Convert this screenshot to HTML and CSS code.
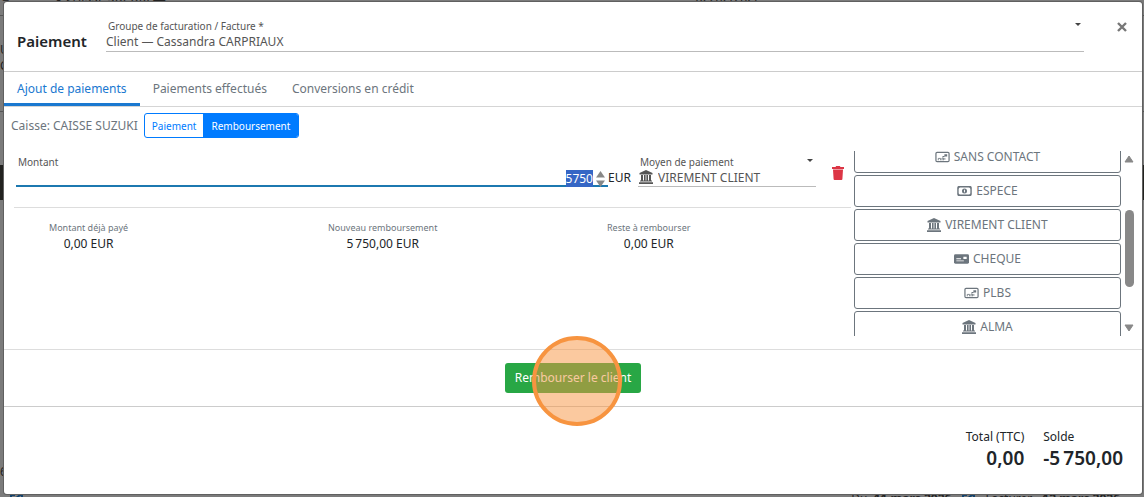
FILE: index.html
```html
<!DOCTYPE html>
<html lang="fr">
<head>
<meta charset="utf-8">
<title>Paiement</title>
<link rel="stylesheet" href="styles.css">
</head>
<body>
<svg class="sprite" aria-hidden="true">
  <symbol id="bank" viewBox="0 0 14 14"><path fill="currentColor" d="M7 0 13.500 3v1.400H.5V3zM2 5h2v5.400h1V5h1.600v5.400h.8V5H9v5.400h1V5h2v5.400h1v1H1v-1h1zM0 12.200h14V14H0z"/></symbol>
  <symbol id="card" viewBox="0 0 16 12"><rect x="1" y="1" width="14" height="10" rx="1.200" fill="none" stroke="currentColor" stroke-width="1.300"/><path d="M3.500 9.500V7.500H6v2M7.500 9.500V7H9v2.500M10.500 7v2" fill="none" stroke="currentColor" stroke-width=".9"/><path fill="currentColor" d="M10 3h3v2.500h-3zM8 5h2v1H8z"/></symbol>
  <symbol id="cash" viewBox="0 0 16 12"><rect x="1" y="1.500" width="14" height="9" rx="1" fill="none" stroke="currentColor" stroke-width="1.500"/><circle cx="8" cy="6" r="2.700" fill="currentColor"/><path d="M8 4.600v2.800" stroke="#fff"/><path fill="currentColor" d="M1 1h3L1 4zM15 1v3l-3-3zM1 11V8l3 3zM15 11h-3l3-3z"/></symbol>
  <symbol id="cheque" viewBox="0 0 16 12"><rect y="1" width="16" height="10" rx="1.500" fill="currentColor"/><path fill="#fff" d="M2.500 5.200h5v1h-5zM2.500 7.500h8v1h-8zM10 3.500h3.500V6H10z"/></symbol>
  <symbol id="link" viewBox="0 0 14 12"><path d="M6 2H2v8h8V7M5 7l7-6M8 1h5v5" fill="none" stroke="currentColor" stroke-width="2"/></symbol>
</svg>

<div class="app">
  <div class="app-top"><b>≡</b><span>● CAISSE SUZUKI ▬</span><span class="app-search">Rechercher</span></div>
  <div class="app-side">U<br>CA</div>
  <div class="app-bar"></div>
  <div class="app-row">6</div>
  <div class="app-bottom">
    <svg class="app-link"><use href="#link"/></svg>
    <div class="app-dates"><span>Du <b>&nbsp;11 mars 2026</b></span><svg class="app-link"><use href="#link"/></svg><span>Facturer</span><b>12 mars 2026</b></div>
  </div>
</div>

<main class="dialog" role="dialog" aria-labelledby="title">
  <header class="head">
    <h1 class="title" id="title">Paiement</h1>
    <div class="field group">
      <label class="label" for="group">Groupe de facturation / Facture *</label>
      <select class="select" id="group"><option>Client — Cassandra CARPRIAUX</option></select>
    </div>
    <button class="close" type="button" aria-label="Fermer"><svg viewBox="0 0 10 10"><path d="m1 1 8 8m0-8-8 8" stroke="currentColor" stroke-width="2.400"/></svg></button>
  </header>

  <nav class="tabs">
    <button class="tab active" type="button">Ajout de paiements</button>
    <button class="tab" type="button">Paiements effectués</button>
    <button class="tab" type="button">Conversions en crédit</button>
  </nav>

  <div class="cashdesk">
    <span>Caisse: CAISSE SUZUKI</span>
    <div class="switch"><button class="mode" type="button">Paiement</button><button class="mode on" type="button">Remboursement</button></div>
  </div>

  <section class="body">
    <div class="left">
      <div class="entry">
        <div class="amount">
          <label class="label" for="amount">Montant</label>
          <div class="amount-line">
            <input class="amount-input" id="amount" type="text" inputmode="numeric" value="5750">
            <div class="steps">
              <button class="step" type="button" aria-label="Plus"><svg viewBox="0 0 9 7"><path d="M4.500 0 9 6.500H0z" fill="currentColor"/></svg></button>
              <button class="step" type="button" aria-label="Moins"><svg viewBox="0 0 9 7"><path d="M4.500 7 9 .5H0z" fill="currentColor"/></svg></button>
            </div>
          </div>
        </div>
        <span class="currency">EUR</span>
        <div class="field method">
          <label class="label" for="method">Moyen de paiement</label>
          <div class="method-line"><svg class="bank"><use href="#bank"/></svg><select class="select" id="method"><option>VIREMENT CLIENT</option></select></div>
        </div>
        <button class="delete" type="button" aria-label="Supprimer"><svg viewBox="0 0 12 14"><path fill="currentColor" d="M0 1h3.500L4.200 0h3.600l.7 1H12v2H0zM1 3.500h10l-.6 9.500a1 1 0 0 1-1 1H2.600a1 1 0 0 1-1-1z"/></svg></button>
      </div>
      <dl class="sums">
        <div class="sum"><dt>Montant déjà payé</dt><dd>0,00 EUR</dd></div>
        <div class="sum"><dt>Nouveau remboursement</dt><dd>5&#8239;750,00 EUR</dd></div>
        <div class="sum"><dt>Reste à rembourser</dt><dd>0,00 EUR</dd></div>
      </dl>
    </div>
    <div class="methods">
      <div class="list">
        <button class="pay" type="button"><svg class="wide"><use href="#card"/></svg>SANS CONTACT</button>
        <button class="pay" type="button"><svg class="wide"><use href="#cash"/></svg>ESPECE</button>
        <button class="pay" type="button"><svg class="bank"><use href="#bank"/></svg>VIREMENT CLIENT</button>
        <button class="pay" type="button"><svg class="wide"><use href="#cheque"/></svg>CHEQUE</button>
        <button class="pay" type="button"><svg class="wide"><use href="#card"/></svg>PLBS</button>
        <button class="pay" type="button"><svg class="bank"><use href="#bank"/></svg>ALMA</button>
      </div>
      <div class="scroll">
        <svg class="arrow" viewBox="0 0 10 8"><path d="M5 1 9 7H1z" fill="currentColor" stroke="currentColor" stroke-linejoin="round"/></svg>
        <div class="track"><div class="thumb"></div></div>
        <svg class="arrow" viewBox="0 0 10 8"><path d="M5 7 9 1H1z" fill="currentColor" stroke="currentColor" stroke-linejoin="round"/></svg>
      </div>
    </div>
  </section>

  <div class="action">
    <div class="target"><button class="refund" type="button">Rembourser le client</button><span class="halo"></span></div>
  </div>

  <footer class="foot">
    <div class="total">Total (TTC)<strong>0,00</strong></div>
    <div class="balance">Solde<strong>-5&#8239;750,00</strong></div>
  </footer>
</main>
<script src="app.js"></script>
</body>
</html>
```
FILE: styles.css
```css
* { box-sizing: border-box; }
body { margin: 0; height: 100vh; overflow: hidden; background: #7b7b7b; font: 12px/16px "Noto Sans", "Open Sans", sans-serif; color: #212529; }
button, input, select { font: inherit; color: inherit; margin: 0; padding: 0; border: 0; background: none; }
h1, dl, dd { margin: 0; }
svg { display: block; flex: none; }
.sprite { position: absolute; width: 0; height: 0; }

.app { height: 100vh; display: flex; flex-direction: column; color: #222; overflow: hidden; }
.app-top { height: 26px; margin-top: -10px; padding: 0 2px; display: flex; align-items: flex-start; gap: 46px; border-bottom: 1px solid #555; }
.app-search { margin-left: 484px; }
.app-side { height: 70px; margin-top: 26px; border-bottom: 1px solid #555; overflow: hidden; white-space: nowrap; width: 100%; }
.app-bar { height: 35px; margin-top: 53px; flex: none; background: #22221f; }
.app-row { margin-top: auto; line-height: 16px; }
.app-bottom { height: 17px; flex: none; padding: 13px 24px 0 9px; display: flex; justify-content: space-between; overflow: hidden; }
.app-dates { display: flex; gap: 10px; line-height: 12px; }
.app-link { width: 14px; height: 12px; color: #12436e; }

.dialog { position: absolute; top: 2px; left: 4px; right: 2px; background: #fff; border-radius: 3px; box-shadow: 0 0 0 1px #606060; }

.head { display: flex; height: 70px; padding: 16px 15px 0 13px; border-bottom: 1px solid #ccc; }
.title { width: 89px; padding-top: 12px; font-size: 15px; line-height: 22px; font-weight: 600; }
.field { position: relative; border-bottom: 1px solid #bbb; color: #555; }
.field::after { content: ""; position: absolute; top: 5px; right: 3px; border: 3px solid transparent; border-top-color: #444; border-bottom: 0; }
.group { flex: 1; height: 34px; }
.label { display: block; padding-left: 2px; font-size: 10px; line-height: 16px; color: #555; }
.select { display: block; width: 100%; height: 16px; appearance: none; line-height: 16px; }
.close { width: 10px; height: 10px; margin: 4px 0 0 33px; color: #777; }

.tabs { display: flex; height: 35px; border-bottom: 1px solid #d5d5d5; }
.tab { padding: 0 12px 0 13px; color: #6c757d; }
.tab.active { padding: 3px 13px 0; color: #1a78d0; border-bottom: 3px solid #1a78d0; }

.cashdesk { display: flex; align-items: center; gap: 6px; padding: 6px 7px; color: #6c757d; }
.switch { display: flex; height: 25px; border: 1px solid #007bff; border-radius: 3px; overflow: hidden; }
.mode { padding: 0 7px; font-size: 10px; color: #007bff; }
.mode.on { padding: 0 8px; background: #007bff; color: #fff; }

.body { display: flex; height: 206px; padding: 7px 7px 0 10px; border-bottom: 1px solid #ddd; }
.left { flex: 1; }
.entry { display: flex; height: 57px; padding: 3px 0 0 2px; border-bottom: 1px solid #ddd; }
.amount { flex: 1; height: 33px; border-bottom: 2px solid #1c78b0; }
.amount-line { display: flex; height: 17px; justify-content: flex-end; }
.amount-input { flex: 1; min-width: 0; height: 17px; text-align: right; outline: 0; }
.amount-input::selection { background: #3566c5; color: #fff; }
.steps { width: 15px; padding-left: 3px; display: grid; align-content: center; gap: 2px; }
.step { width: 9px; height: 7px; color: #888; }
.currency { width: 30px; padding-top: 16px; }
.method { width: 178px; height: 33px; }
.method-line { display: flex; gap: 5px; padding-left: 1px; }
.bank { width: 14px; height: 14px; }
.delete { width: 12px; height: 14px; margin: 12px 7px 0 16px; color: #dc3545; }
.sums { display: grid; grid-template-columns: repeat(3, 1fr); justify-items: start; padding-top: 12px; }
.sum { padding-left: 35px; text-align: center; }
.sum dt { font-size: 9px; line-height: 16px; color: #6c757d; }

.methods { display: flex; width: 281px; height: 185px; margin-left: 3px; gap: 2px; }
.list { flex: 1; display: flex; flex-direction: column; justify-content: flex-end; gap: 2px; overflow: hidden; }
.list::after { content: ""; height: 0; margin-bottom: -9px; }
.pay { flex: none; height: 32px; display: flex; align-items: center; justify-content: center; gap: 4px; border: 1px solid #6c757d; border-radius: 3px; color: #6c757d; }
.wide { width: 15px; height: 12px; }
.scroll { width: 12px; display: flex; flex-direction: column; align-items: center; padding: 4px 0; color: #888; }
.arrow { width: 10px; height: 8px; }
.track { flex: 1; padding-top: 47px; }
.thumb { width: 9px; height: 77px; border-radius: 5px; background: #888; }

.action { display: flex; justify-content: center; height: 57px; padding: 13px 0; border-bottom: 1px solid #ccc; }
.target { position: relative; }
.refund { height: 30px; padding: 0 10px; border-radius: 3px; background: #28a745; color: #fff; }
.halo { position: absolute; top: -27px; left: 27px; width: 90px; height: 90px; border: 4px solid #f79440; border-radius: 50%; background: rgba(247, 148, 64, .5); pointer-events: none; }

.foot { display: flex; justify-content: flex-end; gap: 19px; padding: 22px 19px 23px; }
.total { text-align: right; }
.foot strong { display: block; font-size: 19px; line-height: 26px; font-weight: 600; }
```
FILE: app.js
```js
const amount = document.getElementById("amount");
amount.focus();
amount.select();
```
